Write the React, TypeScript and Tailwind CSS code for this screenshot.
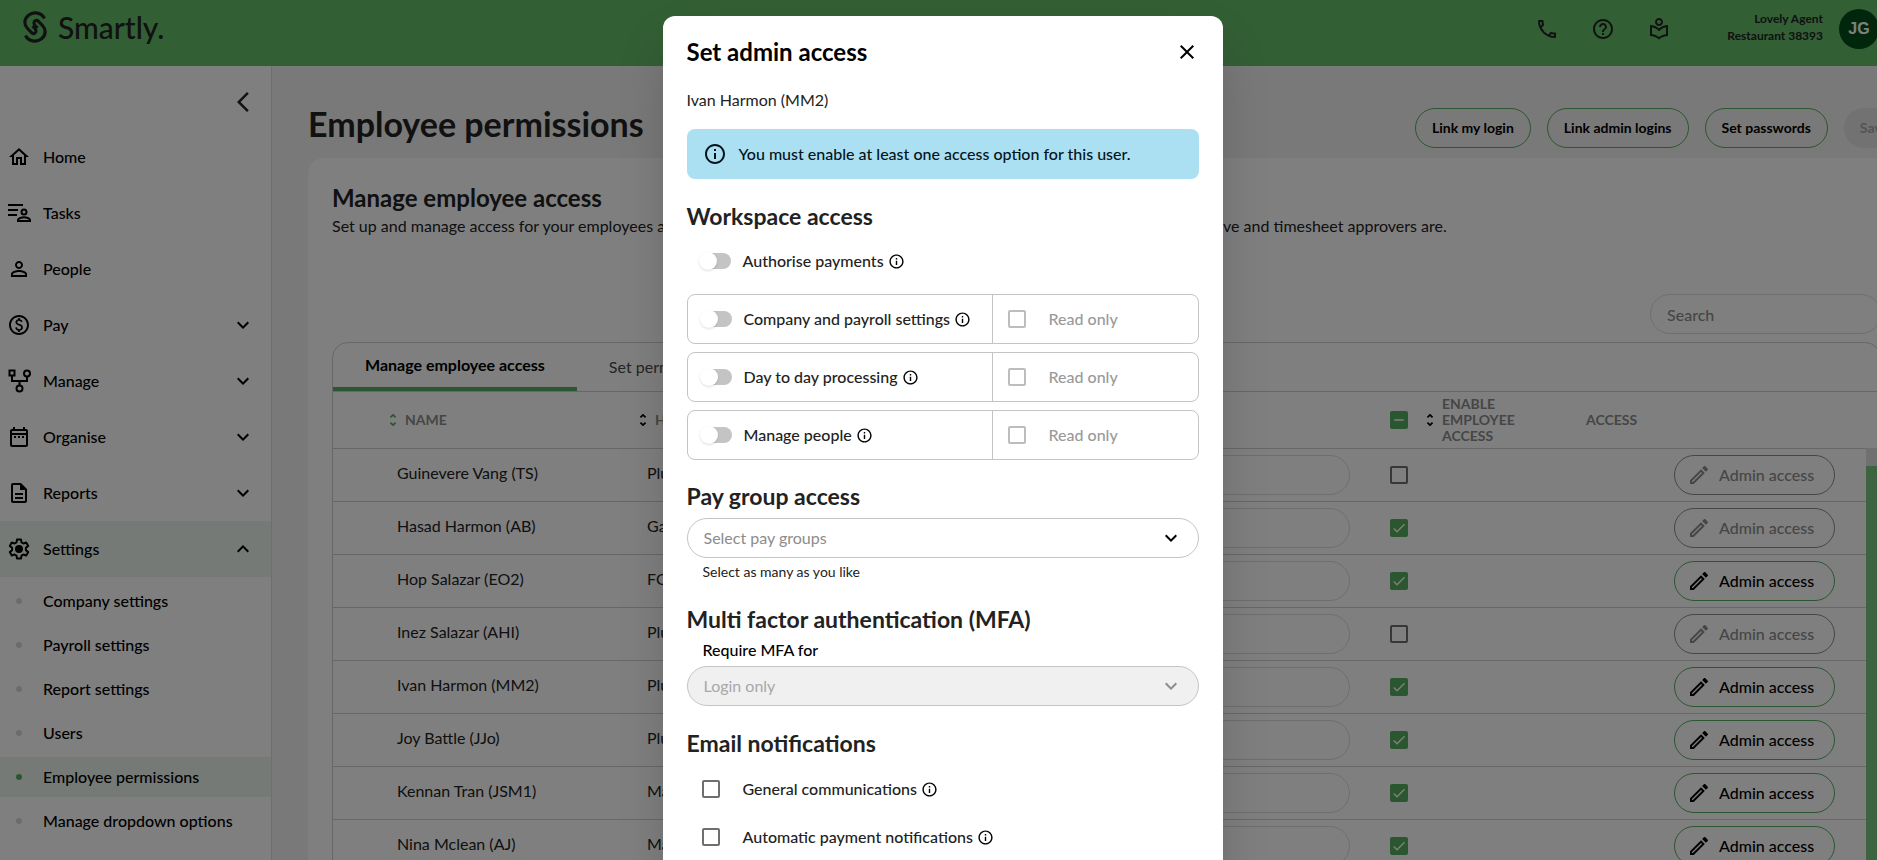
import { useState } from 'react';
import type { ComponentType, ReactNode } from 'react';
import {
  MdArrowBackIosNew,
  MdCheck,
  MdClose,
  MdExpandLess,
  MdExpandMore,
  MdHelpOutline,
  MdInfoOutline,
  MdOutlineDateRange,
  MdOutlineDescription,
  MdOutlineEdit,
  MdOutlineHome,
  MdOutlineLocalLibrary,
  MdOutlinePaid,
  MdOutlinePhone,
  MdPersonOutline,
  MdRemove,
} from 'react-icons/md';

interface IconProps {
  className?: string;
}

interface NavItem {
  label: string;
  icon: ComponentType<IconProps>;
  expandable?: boolean;
  open?: boolean;
}

interface Employee {
  name: string;
  location: string;
  enabled: boolean;
  canEdit: boolean;
}

function TasksIcon({ className }: IconProps) {
  return (
    <svg viewBox="0 0 24 24" fill="none" stroke="currentColor" strokeWidth="2" className={className}>
      <path d="M1 4h15M1 9h10M1 14h9" />
      <circle cx="17" cy="11" r="2.500" />
      <path d="M11 20v-1c0-1.800 3.800-2.700 6-2.700s6 .9 6 2.700v1z" />
    </svg>
  );
}

function FlowIcon({ className }: IconProps) {
  return (
    <svg viewBox="0 0 24 24" fill="none" stroke="currentColor" strokeWidth="2" className={className}>
      <path d="M2.500 1.500h5v5h-5zM5 6.500V12h15V8M12.500 12v4" />
      <circle cx="20" cy="4.500" r="3" />
      <circle cx="12.500" cy="19.500" r="3" />
    </svg>
  );
}

function GearIcon({ className }: IconProps) {
  return (
    <svg viewBox="0 0 24 24" fill="none" stroke="currentColor" strokeWidth="2" strokeLinejoin="round" className={className}>
      <path d="M10 2.500h4l.5 2.900 1.900 1.100 2.800-1 2 3.400-2.300 1.900v2.400l2.300 1.900-2 3.400-2.800-1-1.900 1.100-.5 2.900h-4l-.5-2.900-1.900-1.100-2.800 1-2-3.400 2.300-1.900v-2.400L2.800 8.900l2-3.400 2.800 1 1.900-1.100z" />
      <circle cx="12" cy="12" r="3" fill="currentColor" />
    </svg>
  );
}

function LogoMark() {
  return (
    <svg viewBox="0 0 24 32" fill="none" stroke="currentColor" strokeWidth="3.200" className="h-8 w-6">
      <path d="M21.500 7.500C18.500 1.500 10.500.2 5.500 4.200c-4.500 3.600-4.800 9.300-1 13.300l4 4.200c1.800 1.900 4.500.6 4.500-1.700 0-1.500-.8-2.300-1.800-3.400L9.500 15" />
      <path d="M2.500 24.500c3 6 11 7.300 16 3.300 4.500-3.600 4.800-9.300 1-13.300l-4-4.200c-1.800-1.900-4.500-.6-4.500 1.700 0 1.500.8 2.300 1.800 3.400l1.700 1.600" />
    </svg>
  );
}

function SortIcon({ className }: IconProps) {
  return (
    <svg viewBox="0 0 8 14" fill="none" stroke="currentColor" strokeWidth="2" className={`h-3 w-2 shrink-0 ${className ?? ''}`}>
      <path d="M1 4l3-3 3 3M1 10l3 3 3-3" />
    </svg>
  );
}

const navItems: NavItem[] = [
  { label: 'Home', icon: MdOutlineHome },
  { label: 'Tasks', icon: TasksIcon },
  { label: 'People', icon: MdPersonOutline },
  { label: 'Pay', icon: MdOutlinePaid, expandable: true },
  { label: 'Manage', icon: FlowIcon, expandable: true },
  { label: 'Organise', icon: MdOutlineDateRange, expandable: true },
  { label: 'Reports', icon: MdOutlineDescription, expandable: true },
  { label: 'Settings', icon: GearIcon, expandable: true, open: true },
];

const settingsLinks = [
  'Company settings',
  'Payroll settings',
  'Report settings',
  'Users',
  'Employee permissions',
  'Manage dropdown options',
  'New features',
];

const employees: Employee[] = [
  { name: 'Guinevere Vang (TS)', location: 'Plumbing', enabled: false, canEdit: false },
  { name: 'Hasad Harmon (AB)', location: 'Gardening', enabled: true, canEdit: false },
  { name: 'Hop Salazar (EO2)', location: 'FOH', enabled: true, canEdit: true },
  { name: 'Inez Salazar (AHI)', location: 'Plumbing', enabled: false, canEdit: false },
  { name: 'Ivan Harmon (MM2)', location: 'Plumbing', enabled: true, canEdit: true },
  { name: 'Joy Battle (JJo)', location: 'Plumbing', enabled: true, canEdit: true },
  { name: 'Kennan Tran (JSM1)', location: 'Management', enabled: true, canEdit: true },
  { name: 'Nina Mclean (AJ)', location: 'Management', enabled: true, canEdit: true },
];

const workspaceOptions = ['Company and payroll settings', 'Day to day processing', 'Manage people'];

const emailOptions = ['General communications', 'Automatic payment notifications', 'Leave notifications'];

function TopBar() {
  return (
    <header className="flex h-[66px] shrink-0 items-start justify-between bg-[#66be6b] pt-[9px] pr-[62px] pl-[23px]">
      <a href="#home" className="flex items-center gap-[11px]">
        <LogoMark />
        <span className="text-[30px] leading-9 font-medium">Smartly.</span>
      </a>
      <div className="flex items-center">
        <nav className="flex gap-8 pr-[52px]">
          <button type="button" aria-label="Phone"><MdOutlinePhone className="size-6" /></button>
          <button type="button" aria-label="Help"><MdHelpOutline className="size-6" /></button>
          <button type="button" aria-label="Library"><MdOutlineLocalLibrary className="size-6" /></button>
        </nav>
        <p className="w-[100px] pb-1 text-right text-xs leading-[17px] font-bold">
          Lovely Agent
          <br />
          Restaurant 38393
        </p>
        <button type="button" className="ml-4 size-10 rounded-full bg-[#004d16] font-['Liberation_Sans',sans-serif] text-base font-bold text-white">
          JG
        </button>
      </div>
    </header>
  );
}

function Sidebar() {
  return (
    <aside className="w-[272px] shrink-0 border-r border-[#dcdcdc] bg-white">
      <div className="flex h-[63px] items-center justify-end pt-2 pr-4">
        <button type="button" aria-label="Collapse menu"><MdArrowBackIosNew className="size-6" /></button>
      </div>
      <nav className="text-black">
        {navItems.map(({ label, icon: Icon, expandable, open }) => (
          <button
            key={label}
            type="button"
            className={`flex h-14 w-full items-center pr-4 pl-[7px] text-left font-medium ${open ? 'bg-[#eaf5ed]' : ''}`}
          >
            <Icon className="size-6" />
            <span className="ml-3 flex-1">{label}</span>
            {expandable && (open ? <MdExpandLess className="size-6" /> : <MdExpandMore className="size-6" />)}
          </button>
        ))}
        <ul className="mt-1 flex flex-col gap-1">
          {settingsLinks.map((label) => {
            const active = label === 'Employee permissions';
            return (
              <li key={label}>
                <a
                  href="#settings"
                  className={`flex h-10 items-center gap-[21px] pl-4 font-medium ${active ? 'bg-[#eaf5ed]' : ''}`}
                >
                  <span className={`size-1.5 rounded-full ${active ? 'bg-[#55ae5e]' : 'bg-[#d8d8d8]'}`} />
                  {label}
                </a>
              </li>
            );
          })}
        </ul>
      </nav>
    </aside>
  );
}

function TickBox({ checked, mixed, label }: { checked?: boolean; mixed?: boolean; label: string }) {
  const [on, setOn] = useState(Boolean(checked || mixed));
  return (
    <label className="relative block size-[18px]">
      <input
        type="checkbox"
        aria-label={label}
        checked={on}
        onChange={(e) => setOn(e.target.checked)}
        className="block size-[18px] appearance-none rounded-xs border-2 border-[#6f6f6f] checked:border-[#55ae5e] checked:bg-[#55ae5e]"
      />
      {on && (
        <span className="pointer-events-none absolute inset-0 flex items-center justify-center text-white">
          {mixed ? <MdRemove className="size-4" /> : <MdCheck className="size-4" />}
        </span>
      )}
    </label>
  );
}

function EmployeeTable() {
  return (
    <table className="w-full table-fixed border-collapse">
      <thead>
        <tr className="h-14 border-b border-[#cfcfcf] text-left text-sm leading-4 text-[#8c8c8c]">
          <th className="w-[310px] pl-14">
            <span className="flex items-center gap-2"><SortIcon className="text-[#55ae5e]" />NAME</span>
          </th>
          <th className="w-[350px]">
            <span className="flex items-center gap-2"><SortIcon className="-ml-1 text-black" />HOME LOCATION</span>
          </th>
          <th>APPROVER</th>
          <th className="w-[52px] pl-4"><TickBox mixed label="Enable all employees" /></th>
          <th className="w-[148px]">
            <span className="flex items-center gap-2">
              <SortIcon className="text-black" />
              <span className="w-20">ENABLE EMPLOYEE ACCESS</span>
            </span>
          </th>
          <th className="w-[306px] pl-3">ACCESS</th>
        </tr>
      </thead>
      <tbody>
        {employees.map(({ name, location, enabled, canEdit }) => (
          <tr key={name} className="h-[53px] border-b border-[#cfcfcf]">
            <td className="pb-1 pl-16">{name}</td>
            <td className="pb-1 pl-1">{location}</td>
            <td className="pr-6">
              <select aria-label={`Approver for ${name}`} className="block h-10 w-full appearance-none rounded-full border border-[#dcdcdc] px-4">
                <option>Not set</option>
              </select>
            </td>
            <td className="pl-4"><TickBox checked={enabled} label={`Enable ${name}`} /></td>
            <td />
            <td className="pr-[45px]">
              <button
                type="button"
                disabled={!canEdit}
                className={`ml-auto flex h-10 w-[161px] items-center gap-2 rounded-full border pl-3 font-medium ${
                  canEdit ? 'border-[#55ae5e] text-black' : 'border-[#8c8c8c] text-[#8c8c8c]'
                }`}
              >
                <MdOutlineEdit className="size-6" />
                Admin access
              </button>
            </td>
          </tr>
        ))}
      </tbody>
    </table>
  );
}

function PermissionsPage() {
  const pill = 'h-10 rounded-full border border-[#55ae5e] px-4 text-sm font-bold text-black';
  return (
    <main className="min-w-0 flex-1 bg-[#f2f2f2] px-9">
      <div className="flex h-[92px] items-center justify-between pt-6">
        <h1 className="text-[34px] leading-10 font-bold">Employee permissions</h1>
        <div className="flex gap-4 pt-2">
          <button type="button" className={pill}>Link my login</button>
          <button type="button" className={pill}>Link admin logins</button>
          <button type="button" className={pill}>Set passwords</button>
          <button type="button" disabled className="h-10 rounded-full bg-[#e4e4e4] px-4 text-sm font-bold text-[#a8a8a8]">Save</button>
        </div>
      </div>
      <section className="rounded-t-2xl bg-white px-6 pt-6">
        <h2 className="text-2xl leading-8 font-bold">Manage employee access</h2>
        <p className="leading-6 whitespace-nowrap">
          Set up and manage access for your employees and payroll administrators. You can also choose who every employee's default leave and timesheet approvers are.
        </p>
        <div className="mt-14 flex justify-end">
          <input
            type="search"
            aria-label="Search"
            placeholder="Search"
            className="h-10 w-[231px] rounded-full border border-[#dcdcdc] px-4 font-medium placeholder:text-[#8c8c8c]"
          />
        </div>
        <div className="mt-2 overflow-hidden rounded-t-2xl border border-[#cfcfcf]">
          <div className="flex h-[49px] border-b border-[#cfcfcf]">
            <button type="button" className="border-b-4 border-[#55ae5e] px-8 font-bold text-black">Manage employee access</button>
            <button type="button" className="px-8 text-[#4a4a4a]">Set permissions</button>
          </div>
          <div className="relative">
            <EmployeeTable />
            <div className="absolute top-14 right-0 bottom-0 w-3.5 bg-[#e0e0e0] pt-[18px]">
              <div className="h-full bg-[#7cc680]" />
            </div>
          </div>
        </div>
      </section>
    </main>
  );
}

function Toggle({ label }: { label: string }) {
  return (
    <label className="flex items-center">
      <span className="relative mr-3 flex h-[18px] w-8 items-center">
        <input type="checkbox" role="switch" className="peer ml-1 h-4 w-7 appearance-none rounded-full bg-[#c4c4c4] checked:bg-[#55ae5e]" />
        <span className="pointer-events-none absolute left-0 size-[18px] rounded-full bg-white shadow-sm peer-checked:left-4" />
      </span>
      {label}
      <MdInfoOutline className="ml-1 size-[17px] text-black" />
    </label>
  );
}

function SectionTitle({ children }: { children: ReactNode }) {
  return <h3 className="text-[23px] leading-8 font-bold">{children}</h3>;
}

function AdminAccessDialog() {
  return (
    <div role="dialog" aria-label="Set admin access" className="w-[560px] rounded-xl bg-white px-6 pt-5 pb-10 shadow-2xl">
      <div className="flex items-center justify-between">
        <h2 className="text-2xl leading-8 font-bold text-black">Set admin access</h2>
        <button type="button" aria-label="Close" className="text-black"><MdClose className="size-6" /></button>
      </div>
      <p className="mt-5 leading-6">Ivan Harmon (MM2)</p>
      <div className="mt-[17px] flex h-[50px] items-center gap-3 rounded-lg bg-[#abe0f2] px-4 font-medium text-[#04141c]">
        <MdInfoOutline className="size-6" />
        You must enable at least one access option for this user.
      </div>
      <div className="mt-[21px]">
        <SectionTitle>Workspace access</SectionTitle>
      </div>
      <div className="mt-[15px] flex h-7 items-center pl-3 font-medium">
        <Toggle label="Authorise payments" />
      </div>
      <div className="mt-[19px] flex flex-col gap-2">
        {workspaceOptions.map((option) => (
          <div key={option} className="flex h-[50px] rounded-lg border border-[#c4c4c4] font-medium">
            <div className="flex w-[305px] items-center border-r border-[#c4c4c4] pl-3">
              <Toggle label={option} />
            </div>
            <label className="flex items-center gap-[23px] pl-[15px] text-[#9a9a9a]">
              <input type="checkbox" disabled className="size-[18px] appearance-none rounded-xs border-2 border-[#bdbdbd]" />
              Read only
            </label>
          </div>
        ))}
      </div>
      <div className="mt-5">
        <SectionTitle>Pay group access</SectionTitle>
      </div>
      <div className="relative mt-1.5">
        <select aria-label="Pay groups" className="block h-10 w-full appearance-none rounded-full border border-[#c4c4c4] px-4 text-[#8c8c8c]">
          <option>Select pay groups</option>
        </select>
        <MdExpandMore className="pointer-events-none absolute top-2 right-4 size-6 text-black" />
      </div>
      <p className="mt-1 pl-4 text-sm leading-5">Select as many as you like</p>
      <div className="mt-[21px]">
        <SectionTitle>Multi factor authentication (MFA)</SectionTitle>
      </div>
      <label htmlFor="mfa" className="mt-[3px] block pl-4 leading-6 font-medium text-black">Require MFA for</label>
      <div className="relative mt-1">
        <select id="mfa" disabled className="block h-10 w-full appearance-none rounded-full border border-[#c4c4c4] bg-[#f0f0f0] px-4 text-[#a8a8a8]">
          <option>Login only</option>
        </select>
        <MdExpandMore className="pointer-events-none absolute top-2 right-4 size-6 text-[#8c8c8c]" />
      </div>
      <div className="mt-[21px]">
        <SectionTitle>Email notifications</SectionTitle>
      </div>
      <div className="mt-1.5">
        {emailOptions.map((option) => (
          <label key={option} className="flex h-12 items-center pl-[15px] font-medium">
            <input type="checkbox" className="mr-[23px] size-[18px] appearance-none rounded-xs border-2 border-[#6f6f6f] checked:bg-[#55ae5e]" />
            {option}
            <MdInfoOutline className="ml-1 size-[17px] text-black" />
          </label>
        ))}
      </div>
    </div>
  );
}

export default function App() {
  return (
    <div className="relative h-screen overflow-hidden font-['Lato','Noto_Sans',sans-serif] text-base text-[#222222]">
      <div className="-mr-16 flex h-full flex-col">
        <TopBar />
        <div className="flex min-h-0 flex-1">
          <Sidebar />
          <PermissionsPage />
        </div>
      </div>
      <div className="absolute inset-0 flex items-start justify-center overflow-hidden bg-black/50 pt-4 pl-2">
        <AdminAccessDialog />
      </div>
    </div>
  );
}
